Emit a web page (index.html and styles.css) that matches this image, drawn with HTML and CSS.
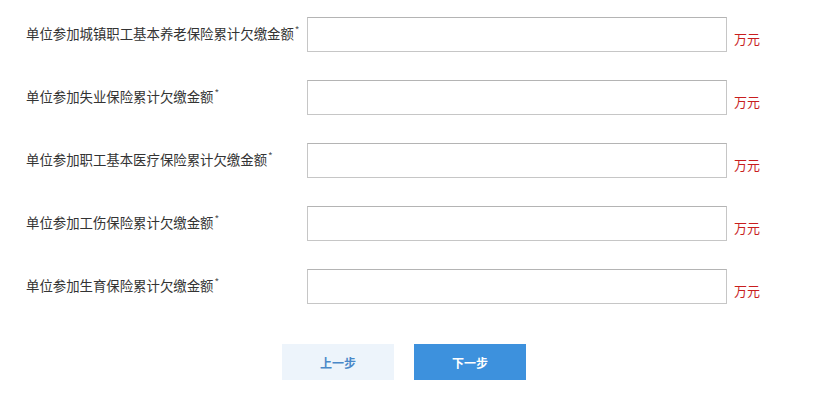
FILE: index.html
```html
<!DOCTYPE html>
<html lang="zh-CN">
<head>
<meta charset="utf-8">
<title>欠缴金额</title>
<link rel="stylesheet" href="styles.css">
</head>
<body>
<div class="form">
  <div class="row">
    <label class="label">单位参加城镇职工基本养老保险累计欠缴金额<span class="req">*</span></label>
    <input class="field" type="text">
    <span class="unit">万元</span>
  </div>
  <div class="row">
    <label class="label">单位参加失业保险累计欠缴金额<span class="req">*</span></label>
    <input class="field" type="text">
    <span class="unit">万元</span>
  </div>
  <div class="row">
    <label class="label">单位参加职工基本医疗保险累计欠缴金额<span class="req">*</span></label>
    <input class="field" type="text">
    <span class="unit">万元</span>
  </div>
  <div class="row">
    <label class="label">单位参加工伤保险累计欠缴金额<span class="req">*</span></label>
    <input class="field" type="text">
    <span class="unit">万元</span>
  </div>
  <div class="row">
    <label class="label">单位参加生育保险累计欠缴金额<span class="req">*</span></label>
    <input class="field" type="text">
    <span class="unit">万元</span>
  </div>
  <div class="actions">
    <button class="btn btn-prev" type="button">上一步</button>
    <button class="btn btn-next" type="button">下一步</button>
  </div>
</div>
</body>
</html>
```
FILE: styles.css
```css
html, body {
  margin: 0;
  padding: 0;
  background: #ffffff;
}
body {
  font-family: "Microsoft YaHei", "Noto Sans CJK SC", "Noto Sans", sans-serif;
  color: #333333;
}
.form {
  padding-top: 17px;
  display: flex;
  flex-direction: column;
  gap: 28px;
}
.row {
  display: flex;
  align-items: center;
  height: 35px;
}
.label {
  box-sizing: border-box;
  width: 307px;
  padding-left: 26px;
  padding-bottom: 7px;
  font-size: 13.4px;
  line-height: 20px;
  color: #333333;
  white-space: nowrap;
}
.req {
  font-size: 10px;
  vertical-align: 5px;
  margin-left: 1px;
  color: #555555;
}
.field {
  box-sizing: border-box;
  width: 420px;
  height: 35px;
  margin: 0;
  border: 1px solid #c6c6c6;
  border-top-color: #b4b4b4;
  background: #ffffff;
  outline: none;
}
.unit {
  align-self: flex-end;
  margin-left: 7px;
  margin-bottom: 5px;
  font-size: 13px;
  line-height: 16px;
  color: #c81e1e;
}
.actions {
  display: flex;
  gap: 20px;
  padding-left: 282px;
  margin-top: 12px;
}
.btn {
  width: 112px;
  height: 36px;
  border: none;
  margin: 0;
  font-family: "Microsoft YaHei", "Noto Sans CJK SC", sans-serif;
  font-size: 12px;
  font-weight: bold;
  cursor: pointer;
}
.btn-prev {
  background: #edf4fb;
  color: #4a88c8;
}
.btn-next {
  background: #3d91dd;
  color: #ffffff;
}
```
